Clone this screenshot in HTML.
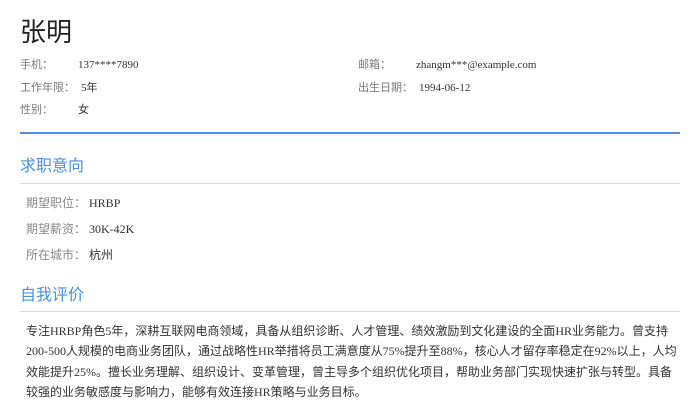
<!DOCTYPE html>
<html><head><meta charset="utf-8"><style>
*{margin:0;padding:0;box-sizing:border-box}
body{width:700px;height:400px;background:#fff;font-family:"Liberation Serif","Noto Sans CJK SC",serif;color:#333;position:relative;overflow:hidden}
.a{position:absolute;white-space:nowrap}
.name{left:20px;top:15px;font-size:26px;color:#222;font-family:"Liberation Sans","Noto Sans CJK SC",sans-serif;line-height:34px}
.l{font-size:11px;color:#777;line-height:14px}
.v{font-size:11px;color:#333;line-height:14px}
.blue{position:absolute;left:20px;width:660px;top:132px;height:2px;background:#4a90e2}
.gray{position:absolute;left:20px;width:660px;height:1px;background:#ddd}
.h{font-size:16px;color:#4a90e2;line-height:20px}
.r{font-size:12px;line-height:16px}
.r .k{color:#888}
p{position:absolute;left:26px;top:321px;width:654px;font-size:12px;line-height:20.3px;color:#333}
</style></head><body>
<div class="a name">张明</div>
<div class="a l" style="left:20px;top:58px">手机：</div><div class="a v" style="left:78px;top:58px">137****7890</div>
<div class="a l" style="left:20px;top:81px">工作年限：</div><div class="a v" style="left:81px;top:81px">5年</div>
<div class="a l" style="left:20px;top:103px">性别：</div><div class="a v" style="left:78px;top:103px">女</div>
<div class="a l" style="left:358px;top:58px">邮箱：</div><div class="a v" style="left:416px;top:58px">zhangm***@example.com</div>
<div class="a l" style="left:358px;top:81px">出生日期：</div><div class="a v" style="left:419px;top:81px">1994-06-12</div>
<div class="blue"></div>
<div class="a h" style="left:20px;top:157px">求职意向</div>
<div class="gray" style="top:183px"></div>
<div class="a r" style="left:26px;top:195px"><span class="k">期望职位：</span> HRBP</div>
<div class="a r" style="left:26px;top:221px"><span class="k">期望薪资：</span> 30K-42K</div>
<div class="a r" style="left:26px;top:247px"><span class="k">所在城市：</span> 杭州</div>
<div class="a h" style="left:20px;top:286px">自我评价</div>
<div class="gray" style="top:311px"></div>
<p>专注HRBP角色5年，深耕互联网电商领域，具备从组织诊断、人才管理、绩效激励到文化建设的全面HR业务能力。曾支持200-500人规模的电商业务团队，通过战略性HR举措将员工满意度从75%提升至88%，核心人才留存率稳定在92%以上，人均效能提升25%。擅长业务理解、组织设计、变革管理，曾主导多个组织优化项目，帮助业务部门实现快速扩张与转型。具备较强的业务敏感度与影响力，能够有效连接HR策略与业务目标。</p>
</body></html>
